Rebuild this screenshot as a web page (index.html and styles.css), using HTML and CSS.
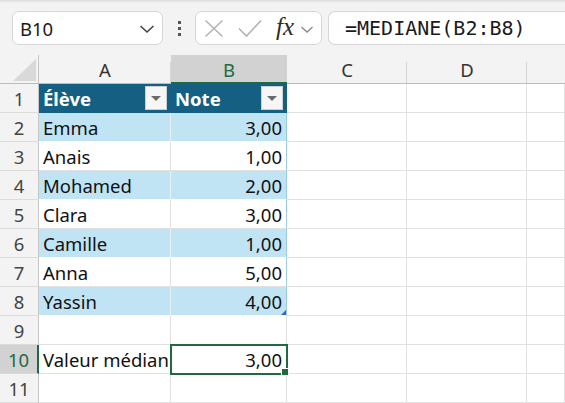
FILE: index.html
```html
<!DOCTYPE html>
<html lang="fr">
<head>
<meta charset="utf-8">
<title>Feuille</title>
<link rel="stylesheet" href="styles.css">
</head>
<body>
<div class="app">
  <div class="toolbar">
    <div class="namebox">
      <span class="name">B10</span>
      <svg class="chev" width="16" height="10" viewBox="0 0 16 10"><polyline points="1.5,2 8,8 14.5,2" fill="none" stroke="#444" stroke-width="1.6"/></svg>
    </div>
    <div class="dots"><span></span><span></span><span></span></div>
    <div class="fxbox">
      <svg class="ico-x" width="20" height="19" viewBox="0 0 20 19"><path d="M1.5 1.5 L18.5 17.5 M18.5 1.5 L1.5 17.5" stroke="#b4b4b4" stroke-width="1.6" fill="none"/></svg>
      <svg class="ico-ok" width="24" height="19" viewBox="0 0 24 19"><polyline points="1,9.5 8.5,17 23,1.5" stroke="#b4b4b4" stroke-width="1.6" fill="none"/></svg>
      <span class="fx">fx</span>
      <svg class="chev-s" width="14" height="9" viewBox="0 0 14 9"><polyline points="1.5,2 7,7 12.5,2" fill="none" stroke="#8a8a8a" stroke-width="1.4"/></svg>
    </div>
    <div class="formula">=MEDIANE(B2:B8)</div>
  </div>

  <div class="sheet">
    <div class="c corner"><svg width="24" height="22" viewBox="0 0 24 22"><polygon points="23,0 23,22 0,22" fill="#d9d9d9"/></svg></div>
    <div class="c ch">A</div>
    <div class="c ch chsel">B</div>
    <div class="c ch">C</div>
    <div class="c ch">D</div>
    <div class="c ch last"></div>

    <div class="c rh">1</div>
    <div class="c th"><span>Élève</span><span class="dd"><i></i></span></div>
    <div class="c th thr"><span>Note</span><span class="dd"><i></i></span></div>
    <div class="c"></div><div class="c"></div><div class="c"></div>

    <div class="c rh">2</div>
    <div class="c band">Emma</div>
    <div class="c band num tr">3,00</div>
    <div class="c"></div><div class="c"></div><div class="c"></div>

    <div class="c rh">3</div>
    <div class="c">Anais</div>
    <div class="c num tr">1,00</div>
    <div class="c"></div><div class="c"></div><div class="c"></div>

    <div class="c rh">4</div>
    <div class="c band">Mohamed</div>
    <div class="c band num tr">2,00</div>
    <div class="c"></div><div class="c"></div><div class="c"></div>

    <div class="c rh">5</div>
    <div class="c">Clara</div>
    <div class="c num tr">3,00</div>
    <div class="c"></div><div class="c"></div><div class="c"></div>

    <div class="c rh">6</div>
    <div class="c band">Camille</div>
    <div class="c band num tr">1,00</div>
    <div class="c"></div><div class="c"></div><div class="c"></div>

    <div class="c rh">7</div>
    <div class="c">Anna</div>
    <div class="c num tr">5,00</div>
    <div class="c"></div><div class="c"></div><div class="c"></div>

    <div class="c rh">8</div>
    <div class="c band">Yassin</div>
    <div class="c band num tr tend">4,00</div>
    <div class="c"></div><div class="c"></div><div class="c"></div>

    <div class="c rh">9</div>
    <div class="c"></div><div class="c"></div><div class="c"></div><div class="c"></div><div class="c"></div>

    <div class="c rh rhsel">10</div>
    <div class="c">Valeur médian</div>
    <div class="c num sel">3,00</div>
    <div class="c"></div><div class="c"></div><div class="c"></div>

    <div class="c rh">11</div>
    <div class="c"></div><div class="c"></div><div class="c"></div><div class="c"></div><div class="c"></div>
  </div>
</div>
</body>
</html>
```

FILE: styles.css
```css
* { box-sizing: border-box; }
html, body { margin: 0; padding: 0; }
body {
  width: 565px;
  height: 403px;
  overflow: hidden;
  background: #ffffff;
  font-family: "Noto Sans", "Open Sans", sans-serif;
}
.app { display: flex; flex-direction: column; }

.toolbar {
  height: 55px;
  background: #f3f3f3;
  box-shadow: inset 0 4px 3px -3px rgba(0,0,0,0.12);
  display: flex;
  align-items: flex-start;
  padding: 11px 0 0 12px;
}
.namebox {
  width: 151px;
  height: 34px;
  background: #fff;
  border: 1px solid #d6d6d6;
  border-radius: 7px;
  display: flex;
  align-items: center;
  justify-content: space-between;
  padding: 0 7px 0 7px;
}
.name { font-size: 18.5px; color: #1b1b1b; }
.chev { margin-top: 2px; }
.dots {
  width: 32px;
  height: 34px;
  display: flex;
  flex-direction: column;
  align-items: center;
  justify-content: center;
  gap: 3px;
}
.dots span { width: 3px; height: 3px; background: #555; }
.fxbox {
  width: 127px;
  height: 34px;
  background: #fff;
  border: 1px solid #d6d6d6;
  border-radius: 7px;
  display: flex;
  align-items: center;
  padding-left: 8px;
}
.ico-x { margin-right: 14px; }
.ico-ok { margin-right: 14px; }
.fx {
  font-family: "Liberation Serif", "DejaVu Serif", serif;
  font-style: italic;
  font-size: 25px;
  color: #2b2b2b;
  margin-top: -3px;
  margin-right: 6px;
}
.chev-s { margin-top: 2px; }
.formula {
  margin-left: 6px;
  flex: 1;
  height: 34px;
  background: #fff;
  border: 1px solid #d6d6d6;
  border-right: none;
  border-radius: 7px 0 0 7px;
  display: flex;
  align-items: center;
  padding-left: 16px;
  font-family: "DejaVu Sans Mono", "Liberation Mono", monospace;
  font-size: 20px;
  color: #1b1b1b;
  white-space: nowrap;
}

.sheet {
  display: grid;
  grid-template-columns: 39px 132px 116px 120px 120px 38px;
  grid-auto-rows: 29px;
}
.c {
  position: relative;
  border-right: 1px solid #e1e1e1;
  border-bottom: 1px solid #e1e1e1;
  display: flex;
  align-items: center;
  padding: 0 4px;
  font-size: 18.5px;
  color: #111;
  white-space: nowrap;
  overflow: hidden;
}
.corner {
  background: #f3f3f3;
  border-right: 1px solid #c6c6c6;
  border-bottom: 1px solid #bcbcbc;
  justify-content: flex-end;
  align-items: flex-end;
  padding: 0 1px 2px 0;
}
.ch {
  background: #f3f3f3 linear-gradient(#d6d6d6, #d6d6d6) no-repeat right bottom / 1px 21px;
  border-right: none;
  border-bottom: 1px solid #bcbcbc;
  justify-content: center;
  color: #333;
  padding-top: 1px;
}
.ch.last { background: #f3f3f3; }
.chsel {
  background: #d2d2d2;
  color: #1e6b41;
  border-bottom: 2px solid #1e6b41;
}
.rh {
  background: #f3f3f3;
  border-right: 1px solid #c6c6c6;
  border-bottom: 1px solid #dcdcdc;
  justify-content: center;
  color: #444;
  padding: 0;
}
.rhsel {
  background: #d2d2d2;
  color: #1e6b41;
  border-right: 2px solid #1e6b41;
}
.th {
  background: #156082;
  color: #fff;
  font-weight: bold;
  justify-content: space-between;
  padding: 0 3px 0 4px;
  border-right: 1px solid #156082;
  border-bottom: 1px solid #156082;
}
.dd {
  width: 22px;
  height: 24px;
  background: #f6f6f6;
  border: 1px solid #cfcfcf;
  display: flex;
  align-items: center;
  justify-content: center;
}
.dd i {
  width: 0;
  height: 0;
  border-left: 5px solid transparent;
  border-right: 5px solid transparent;
  border-top: 5px solid #6b6b6b;
}
.band {
  background: #c1e4f5;
  border-bottom-color: #ffffff;
  border-right-color: #e6f2f8;
}
.num { justify-content: flex-end; }
.tr { border-right-color: #9bcbe3; }
.tend::after {
  content: "";
  position: absolute;
  right: 0;
  bottom: 0;
  width: 0;
  height: 0;
  border-left: 5px solid transparent;
  border-bottom: 5px solid #3b5fc0;
}
.sel {
  overflow: visible;
  outline: 2px solid #1e6b41;
  outline-offset: -1px;
  z-index: 2;
}
.sel::after {
  content: "";
  position: absolute;
  right: -3px;
  bottom: -3px;
  width: 6px;
  height: 6px;
  background: #1e6b41;
  border: 1px solid #fff;
}
```
